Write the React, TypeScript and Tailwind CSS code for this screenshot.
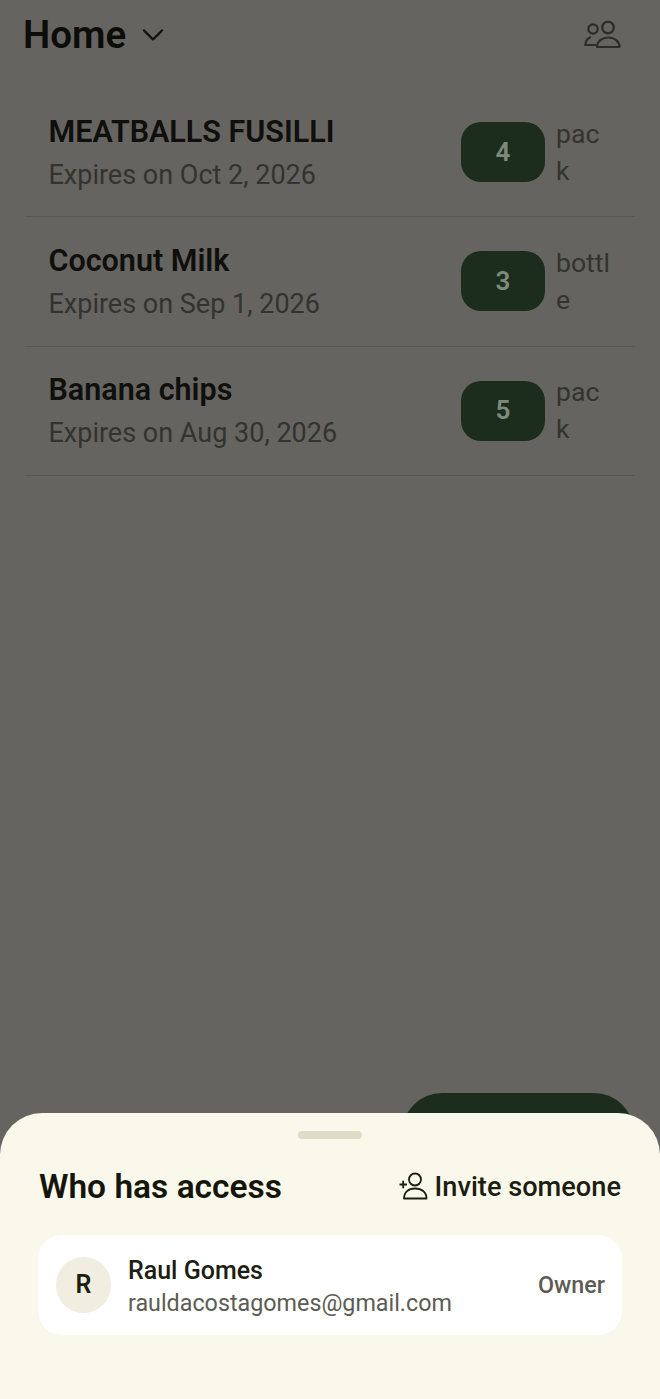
import { ChevronDown } from 'lucide-react';

const items = [
  { name: 'MEATBALLS FUSILLI', expires: 'Expires on Oct 2, 2026', qty: 4, unit: 'pack' },
  { name: 'Coconut Milk', expires: 'Expires on Sep 1, 2026', qty: 3, unit: 'bottle' },
  { name: 'Banana chips', expires: 'Expires on Aug 30, 2026', qty: 5, unit: 'pack' },
];

function PeopleIcon() {
  return (
    <svg width="38" height="30" viewBox="0 0 38 30" fill="none" stroke="#2c2c28" strokeWidth="2.2">
      <circle cx="9" cy="9" r="4.7" />
      <circle cx="24" cy="7.5" r="5.8" />
      <path d="M6 17.5C3.5 18.5 1.6 21 1.4 25H11" strokeLinecap="round" />
      <path d="M13 27H35.5C35.5 21.5 30.5 17.5 24.2 17.5C18 17.5 13 21.5 13 27Z" strokeLinejoin="round" />
    </svg>
  );
}

function InviteIcon() {
  return (
    <svg width="29" height="28" viewBox="0 0 29 28" fill="none" stroke="#1c1e12" strokeWidth="1.8">
      <circle cx="16" cy="7.5" r="6" />
      <path d="M5 26.5C5 20 9.5 16.5 16 16.5C22.5 16.5 27.5 20 27.5 26.5Z" strokeLinejoin="round" />
      <path d="M0.5 12.5H8M4.2 8.7V16.3" />
    </svg>
  );
}

export default function App() {
  return (
    <div className="relative w-[660px] h-[1399px] overflow-hidden bg-[#656460] font-['Roboto',sans-serif]">
      {/* Header */}
      <div className="flex items-center justify-between pl-[23px] pr-[38px] h-[70px]">
        <div className="flex items-center gap-[9px]">
          <span className="text-[38.5px] leading-[42px] font-semibold text-[#0c0c08]">Home</span>
          <ChevronDown size={36} strokeWidth={1.6} className="text-[#12120e]" />
        </div>
        <PeopleIcon />
      </div>

      {/* Pantry list */}
      <div className="mx-[25px] mt-[18px]">
        {items.map((item) => (
          <div key={item.name} className="flex items-center h-[129.3px] pl-[24px] pr-[24px] border-b border-[#565652]">
            <div className="flex-1 min-w-0 -ml-[0.5px]">
              <div className="text-[30.5px] leading-[38px] font-semibold text-[#0f0f0c]">{item.name}</div>
              <div className="text-[27px] leading-[34px] mt-[7px] text-[#33332f]">{item.expires}</div>
            </div>
            <div className="flex items-center justify-center w-[84px] h-[60px] rounded-[20px] bg-[#1c2d1e] text-[26px] font-semibold text-[#7f8a7c]">
              {item.qty}
            </div>
            <div className="w-[55px] ml-[11px] pb-[1px] break-all text-[26.6px] leading-[37px] text-[#33332f]">{item.unit}</div>
          </div>
        ))}
      </div>

      {/* Add button behind the sheet */}
      <div className="absolute left-[402px] top-[1093px] w-[232px] h-[80px] rounded-[40px] bg-[#1c2d1e]" />

      {/* Bottom sheet */}
      <div className="absolute left-0 right-0 bottom-0 h-[286px] rounded-t-[42px] bg-[#f9f8ea] px-[38px]">
        <div className="flex justify-center pt-[18px]">
          <div className="w-[64px] h-[8px] rounded-full bg-[#dfdcc8]" />
        </div>
        <div className="flex items-center justify-between mt-[17px] h-[60px]">
          <span className="text-[33.5px] font-semibold text-[#14160c] ml-[1px] translate-y-[1px]">Who has access</span>
          <div className="flex items-center gap-[7px] pr-[1px]">
            <InviteIcon />
            <span className="text-[27.2px] font-medium text-[#1c1e12] translate-y-[1px]">Invite someone</span>
          </div>
        </div>
        <div className="flex items-center mt-[19px] h-[100px] rounded-[24px] bg-white pl-[18px] pr-[17px]">
          <div className="flex items-center justify-center w-[55px] h-[56px] rounded-full bg-[#f1ede0] text-[25px] font-semibold text-[#1c1e12]">
            R
          </div>
          <div className="flex-1 ml-[17px] pt-[3px]">
            <div className="text-[25px] leading-[32px] font-medium text-[#1c1e12]">Raul Gomes</div>
            <div className="text-[23.3px] leading-[32px] text-[#5c5c52]">rauldacostagomes@gmail.com</div>
          </div>
          <span className="text-[23.3px] font-medium text-[#5c5c52] pt-[1px]">Owner</span>
        </div>
      </div>
    </div>
  );
}
